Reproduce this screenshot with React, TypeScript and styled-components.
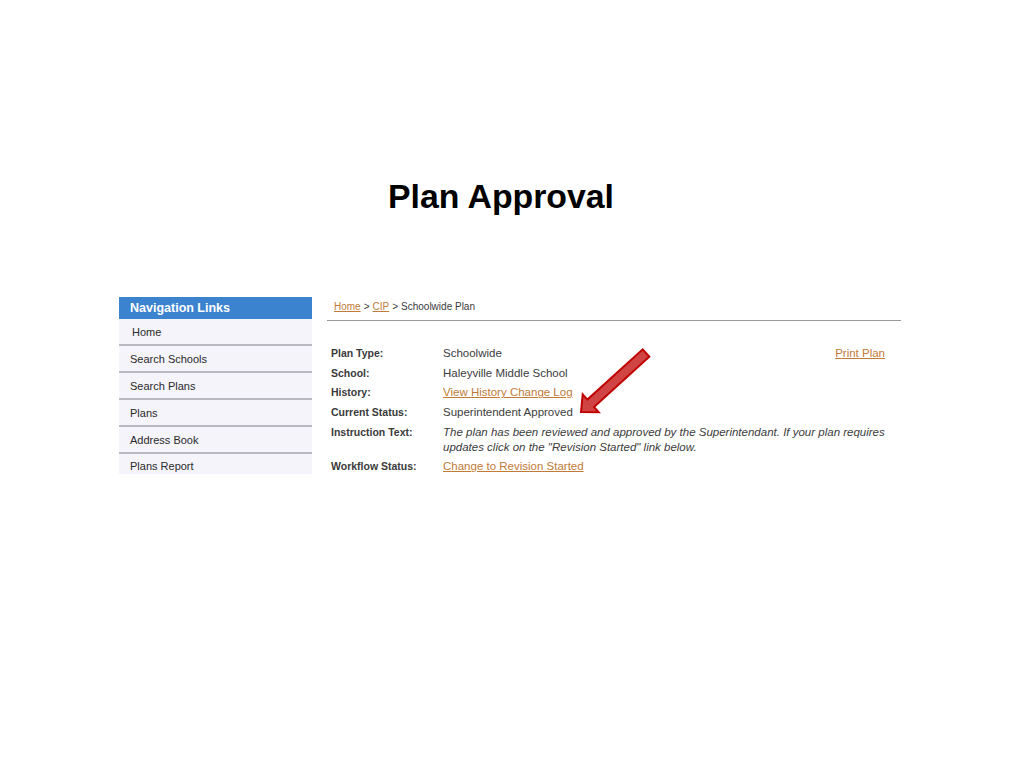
import React from "react";
import styled, { createGlobalStyle } from "styled-components";

const GlobalStyle = createGlobalStyle`
    html, body {
        margin: 0;
        padding: 0;
        background: #ffffff;
    }
    body {
        font-family: "Liberation Sans", Arial, sans-serif;
    }
`;

type NavItem = {
    label: string;
    indent?: boolean;
};

type PlanRow = {
    label: string;
    value: React.ReactNode;
    wide?: boolean;
    aside?: React.ReactNode;
};

const navItems: NavItem[] = [
    { label: "Home", indent: true },
    { label: "Search Schools" },
    { label: "Search Plans" },
    { label: "Plans" },
    { label: "Address Book" },
    { label: "Plans Report" },
];

const Arrow: React.FC = () => (
    <ArrowMark width="82" height="76" viewBox="0 0 82 76">
        <polygon
            points="7,68 24.7,68.2 20,63 75.3,12.7 68.7,5.3 13.4,55.6 8.7,50.4"
            fill="#d04444"
            stroke="#c00000"
            strokeWidth="2"
            strokeLinejoin="miter"
        />
    </ArrowMark>
);

const App: React.FC = () => {
    const rows: PlanRow[] = [
        {
            label: "Plan Type:",
            value: "Schoolwide",
            aside: <Link href="#">Print Plan</Link>,
        },
        { label: "School:", value: "Haleyville Middle School" },
        {
            label: "History:",
            value: <Link href="#">View History Change Log</Link>,
        },
        { label: "Current Status:", value: "Superintendent Approved" },
        {
            label: "Instruction Text:",
            wide: true,
            value: (
                <Italic>
                    The plan has been reviewed and approved by the Superintendant. If
                    your plan requires
                    <br />
                    updates click on the "Revision Started" link below.
                </Italic>
            ),
        },
        {
            label: "Workflow Status:",
            value: <Link href="#">Change to Revision Started</Link>,
        },
    ];

    return (
        <Page>
            <GlobalStyle />
            <Title>Plan Approval</Title>

            <Main>
                <Nav>
                    <NavHeader>Navigation Links</NavHeader>
                    {navItems.map((item, i) => (
                        <NavRow
                            key={item.label}
                            $indent={item.indent}
                            $last={i === navItems.length - 1}
                        >
                            {item.label}
                        </NavRow>
                    ))}
                </Nav>

                <Content>
                    <Breadcrumb>
                        <Link href="#">Home</Link>
                        <Sep>&gt;</Sep>
                        <Link href="#">CIP</Link>
                        <Sep>&gt;</Sep>
                        Schoolwide Plan
                    </Breadcrumb>

                    <PlanTable>
                        {rows.map((row) => (
                            <React.Fragment key={row.label}>
                                <Label>{row.label}</Label>
                                <Value $wide={row.wide}>{row.value}</Value>
                                {!row.wide && <Aside>{row.aside}</Aside>}
                            </React.Fragment>
                        ))}
                    </PlanTable>

                    <Arrow />
                </Content>
            </Main>
        </Page>
    );
};

const Page = styled.div`
    width: 1024px;
    height: 768px;
    box-sizing: border-box;
    padding-top: 176px;
    background: #ffffff;
    overflow: hidden;
`;

const Title = styled.h1`
    margin: 0;
    padding-left: 388px;
    font-family: "Liberation Sans", Arial, sans-serif;
    font-size: 33.8px;
    line-height: 40px;
    font-weight: bold;
    color: #000000;
`;

const Main = styled.div`
    display: flex;
    align-items: flex-start;
    gap: 15px;
    margin-top: 81px;
    padding-left: 119px;
`;

const Nav = styled.div`
    width: 193px;
    display: flex;
    flex-direction: column;
    background: #f4f4fa;
`;

const NavHeader = styled.div`
    height: 22px;
    line-height: 22px;
    padding-left: 11px;
    background: #3b82cf;
    color: #ffffff;
    font-size: 12.5px;
    font-weight: bold;
`;

const NavRow = styled.div<{ $indent?: boolean; $last?: boolean }>`
    height: ${(p) => (p.$last ? "20px" : "25px")};
    line-height: ${(p) => (p.$last ? "24px" : "26px")};
    padding-left: ${(p) => (p.$indent ? "13px" : "11px")};
    border-bottom: ${(p) => (p.$last ? "none" : "2px solid #b8b8c0")};
    font-size: 11px;
    color: #2a2a2a;
`;

const Content = styled.div`
    position: relative;
    width: 574px;
`;

const Breadcrumb = styled.div`
    box-sizing: border-box;
    height: 24px;
    padding: 4px 0 0 7px;
    line-height: 12px;
    font-size: 10px;
    color: #3a3a3a;
    border-bottom: 1px solid #9a9a9a;
`;

const Sep = styled.span`
    margin: 0 3px;
`;

const Link = styled.a`
    color: #c27a38;
    text-decoration: underline;
`;

const PlanTable = styled.div`
    display: grid;
    grid-template-columns: 112px 1fr auto;
    margin-top: 23px;
    padding: 0 16px 0 4px;
    font-size: 11.5px;
    line-height: 15px;
    color: #3c3c3c;
`;

const Label = styled.div`
    padding: 2.3px 0;
    font-size: 10.5px;
    font-weight: bold;
    color: #3a3a3a;
`;

const Value = styled.div<{ $wide?: boolean }>`
    padding: 2.3px 0;
    white-space: nowrap;
    grid-column: ${(p) => (p.$wide ? "2 / 4" : "auto")};
`;

const Aside = styled.div`
    padding: 2.3px 0;
    text-align: right;
`;

const Italic = styled.span`
    font-style: italic;
`;

const ArrowMark = styled.svg`
    position: absolute;
    left: 247px;
    top: 47px;
`;

export default App;
